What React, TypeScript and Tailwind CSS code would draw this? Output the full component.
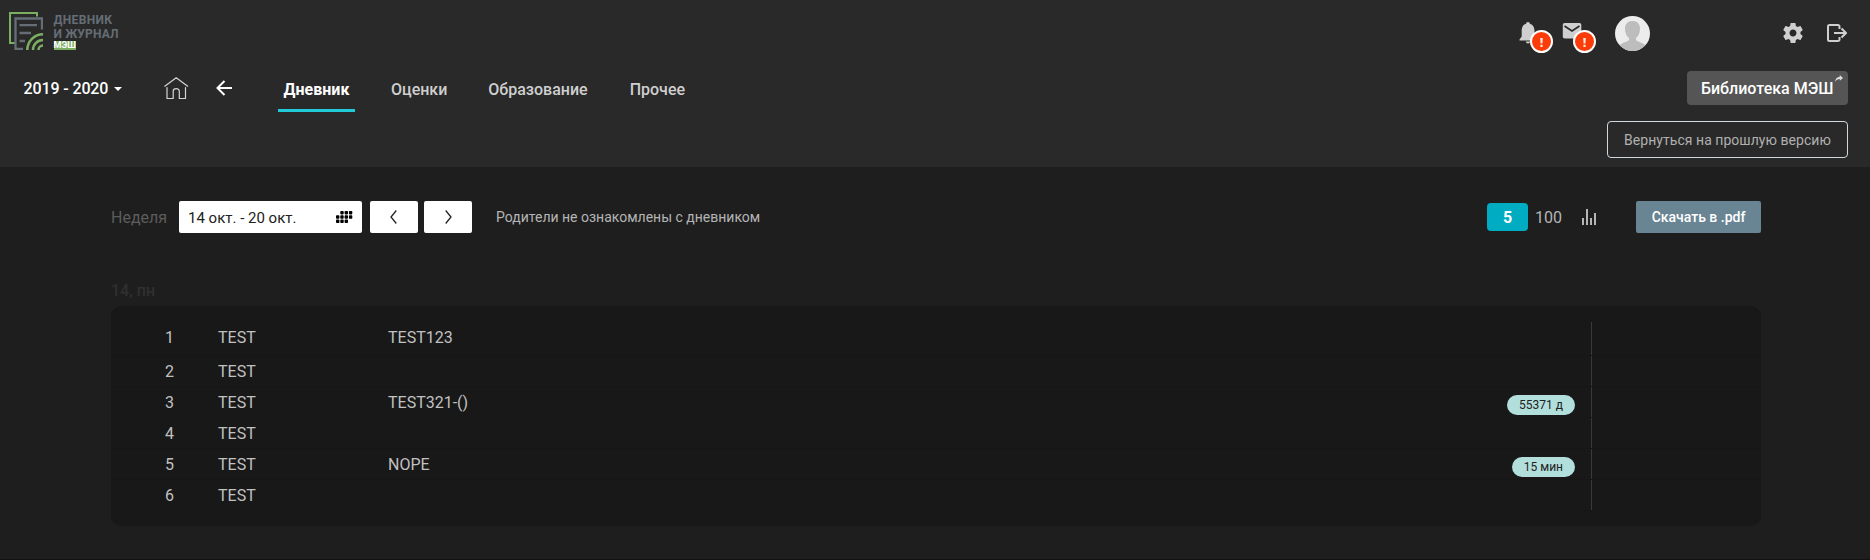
import React from "react";

type Lesson = { n: number; subject: string; topic?: string; time?: string };

const lessons: Lesson[] = [
  { n: 1, subject: "TEST", topic: "TEST123" },
  { n: 2, subject: "TEST" },
  { n: 3, subject: "TEST", topic: "TEST321-()", time: "55371 д" },
  { n: 4, subject: "TEST" },
  { n: 5, subject: "TEST", topic: "NOPE", time: "15 мин" },
  { n: 6, subject: "TEST" },
];

function Logo() {
  return (
    <div className="flex pl-[9px] pt-3">
      <svg width="34" height="38" viewBox="0 0 34 38" fill="none">
        <path d="M6 31H1V1H28V4.500" stroke="#7cae62" strokeWidth="2" />
        <path d="M14 37H6.500V6.500H33V17.500" stroke="#656d76" strokeWidth="2.300" />
        <path d="M10.500 13.200H28M10.500 21H22M10.500 29H16" stroke="#656d76" strokeWidth="2.300" />
        <path d="M18.300 38A15.700 15.700 0 0 1 34 22.300M24 38A10 10 0 0 1 34 28M29.500 38A4.500 4.500 0 0 1 34 33.500" stroke="#7cae62" strokeWidth="2.500" />
      </svg>
      <div className="ml-[10.500px] flex flex-col items-start pt-[1px] text-[12px] font-bold leading-[14px] text-[#656d76]">
        <span className="tracking-[0.350px]">ДНЕВНИК</span>
        <span className="tracking-[0.150px]">И ЖУРНАЛ</span>
        <span className="h-[9px] w-[22px] bg-[#7cae62] text-center text-[9px] leading-[9px] text-white">МЭШ</span>
      </div>
    </div>
  );
}

function Alert() {
  return (
    <span className="absolute left-[11px] top-[8px] flex h-[23px] w-[23px] items-center justify-center rounded-full border-2 border-white bg-[#fb3c09]">
      <svg className="mt-[2px]" width="3" height="9" viewBox="0 0 3 9" fill="#ffe9e0">
        <path d="M.2 0h2.600l-.4 5.500H.6zM.4 6.800h2.200V9H.4z" />
      </svg>
    </span>
  );
}

function Header() {
  return (
    <header className="flex h-[167px] justify-between bg-[#292929]">
      <div className="flex flex-col">
        <div className="h-[71px]"><Logo /></div>
        <div className="flex h-[41px]">
          <div className="flex w-[140px] items-center whitespace-nowrap pb-[5px] pl-[23.500px] text-[16px] font-medium tracking-[-0.120px] text-white">
            2019 - 2020
            <svg className="ml-[6px]" width="8" height="4" viewBox="0 0 8 4" fill="#fff"><path d="M0 0h8L4 4z" /></svg>
          </div>
          <svg className="ml-6 mt-[6px]" width="25" height="23" viewBox="0 0 25 23" fill="none" stroke="#d5d5d5" strokeWidth="1.200" strokeLinejoin="round" strokeLinecap="round">
            <path d="M.8 9.200 12.200.8l11.500 8.400M3 10.500v11h6.200v-7.200c0-3.600 6.100-3.600 6.100 0v7.200h6.200v-11" />
          </svg>
          <svg className="ml-[27px] mt-[9px]" width="16" height="16" viewBox="0 0 16 16" fill="none" stroke="#fff" strokeWidth="2">
            <path d="M16 8H2M8.500 1 1.500 8l7 7" />
          </svg>
          <nav className="ml-[46px] flex text-[16px] font-medium text-[#cfcfcf]">
            <a className="flex w-[77px] justify-center border-b-[3px] border-[#22c9d8] pt-[7px] font-bold leading-6 text-white">Дневник</a>
            <a className="ml-9 pt-[7px] leading-6">Оценки</a>
            <a className="ml-[41px] pt-[7px] leading-6">Образование</a>
            <a className="ml-[42px] pt-[7px] leading-6">Прочее</a>
          </nav>
        </div>
      </div>
      <div className="flex flex-col items-end pr-[22px]">
        <div className="flex h-[71px] pt-4">
          <div className="relative mt-[6px] w-[43px]">
            <svg width="18" height="22" viewBox="0 0 18 22" fill="#cfcfcf"><path d="M9 0c1.200 0 1.800.8 1.900 1.800C14.200 2.800 15.500 5.600 15.500 9v5.500L18 17.500v1H.5v-1l2.200-3V9C2.700 5.600 3.800 2.800 7.100 1.800 7.200.8 7.800 0 9 0zM6.800 19.500h4.400C11 22 7 22 6.800 19.500z" /></svg>
            <Alert />
          </div>
          <div className="relative mt-[6px] w-[53px]">
            <svg className="mt-[1px]" width="20" height="16" viewBox="0 0 20 16"><rect x=".8" width="18.500" height="15.500" rx="1.800" fill="#cfcfcf" /><path d="M2.500 3 10 8l7.500-5" fill="none" stroke="#292929" strokeWidth="1.700" /></svg>
            <Alert />
          </div>
          <svg width="35" height="35" viewBox="0 0 35 35">
            <defs><clipPath id="avatar"><circle cx="17.500" cy="17.500" r="17.500" /></clipPath></defs>
            <g clipPath="url(#avatar)">
              <rect width="35" height="35" fill="#ececec" />
              <path d="M17.500 5c5 0 7.700 3.300 7.500 8-.1 4-1.700 7.500-4 9v2c1 2 8 2 10 7v4H4v-4c2-5 9-5 10-7v-2c-2.300-1.500-3.900-5-4-9-.2-4.700 2.500-8 7.500-8z" fill="#bdbdbd" />
            </g>
          </svg>
          <svg className="ml-[131px] mt-[5px]" width="24" height="24" viewBox="0 0 24 24" fill="#cfcfcf">
            <path d="M19.430 12.980c.04-.32.07-.64.07-.98s-.03-.66-.07-.98l2.110-1.650c.19-.15.24-.42.12-.64l-2-3.460c-.12-.22-.39-.3-.61-.22l-2.490 1c-.52-.4-1.080-.73-1.690-.98l-.38-2.650C14.460 2.180 14.250 2 14 2h-4c-.25 0-.46.18-.49.42l-.38 2.650c-.61.25-1.170.59-1.690.98l-2.490-1c-.23-.09-.49 0-.61.22l-2 3.460c-.13.22-.07.49.12.64l2.110 1.650c-.04.32-.07.65-.07.98s.03.66.07.98l-2.110 1.650c-.19.15-.24.42-.12.64l2 3.460c.12.22.39.3.61.22l2.490-1c.52.4 1.080.73 1.690.98l.38 2.650c.03.24.24.42.49.42h4c.25 0 .46-.18.49-.42l.38-2.650c.61-.25 1.170-.59 1.690-.98l2.490 1c.23.09.49 0 .61-.22l2-3.460c.12-.22.07-.49-.12-.64l-2.110-1.650zM12 15.500c-1.930 0-3.500-1.570-3.500-3.500s1.570-3.500 3.500-3.500 3.500 1.570 3.500 3.500-1.570 3.500-3.500 3.500z" />
          </svg>
          <svg className="ml-[22px] mr-[1px] mt-2" width="20" height="18" viewBox="0 0 20 18" fill="none" stroke="#cfcfcf" strokeWidth="2">
            <path d="M12.500 5V2.500A1.500 1.500 0 0 0 11 1H2.500A1.500 1.500 0 0 0 1 2.500v13A1.500 1.500 0 0 0 2.500 17H11a1.500 1.500 0 0 0 1.500-1.500V13M7 9h12M14.500 4.500 19 9l-4.500 4.500" />
          </svg>
        </div>
        <button className="relative h-[34px] w-[161px] rounded-[4px] bg-[#555] pl-[14px] pt-[2px] text-left text-[16px] font-medium text-white">
          Библиотека МЭШ
          <svg className="absolute right-[5px] top-1" width="8" height="7" viewBox="0 0 8 7" fill="#ddd"><path d="M0 7C.3 4 2 1.900 4.800 1.700V0L8 3 4.800 5.800V4C2.800 4 1 5 0 7z" /></svg>
        </button>
        <button className="mt-4 h-[37px] w-[241px] rounded-[4px] border border-[#cfd8dc] pt-[2px] text-[14px] tracking-[0.040px] text-[#b0b0b0]">Вернуться на прошлую версию</button>
      </div>
    </header>
  );
}

function CalendarDots() {
  const rows = [[1, 2, 3], [0, 1, 2, 3], [0, 1, 2]];
  return (
    <svg width="17" height="12" viewBox="0 0 17 12" fill="#000">
      {rows.map((cols, y) => cols.map((x) => <rect key={`${x}-${y}`} x={x * 4.3} y={y * 4.3} width="3.400" height="3.400" rx=".8" />))}
    </svg>
  );
}

function Toolbar() {
  return (
    <div className="flex h-8 items-center">
      <span className="w-[68px] pt-[2px] text-[16px] text-[#5c5c5c]">Неделя</span>
      <div className="flex h-8 w-[183px] items-center justify-between rounded-[2px] bg-white pl-[9px] pr-[9px] text-[15px] text-[#212121]">
        <span className="pt-[2px]">14 окт. - 20 окт.</span>
        <CalendarDots />
      </div>
      <button className="ml-2 flex h-8 w-12 items-center justify-center rounded-[2px] bg-white">
        <svg className="mr-[1px]" width="7" height="14" viewBox="0 0 7 14" fill="none" stroke="#222" strokeWidth="1.300"><path d="M6.300.5 1 7l5.300 6.500" /></svg>
      </button>
      <button className="ml-[6px] flex h-8 w-12 items-center justify-center rounded-[2px] bg-white">
        <svg width="7" height="14" viewBox="0 0 7 14" fill="none" stroke="#222" strokeWidth="1.300"><path d="M.7.5 6 7 .7 13.500" /></svg>
      </button>
      <span className="ml-6 text-[14px] text-[#b5b5b5]">Родители не ознакомлены с дневником</span>
      <span className="ml-auto flex h-7 w-[41px] items-center justify-center rounded-[4px] bg-[#00acc1] pt-[2px] text-[16px] font-bold text-white">5</span>
      <span className="ml-[7px] w-[27px] pt-[2px] text-[16px] text-[#b5b5b5]">100</span>
      <svg className="ml-5" width="14" height="16" viewBox="0 0 14 16" fill="#b5b5b5"><path d="M0 9h2v7H0zM4 0h2v16H4zM8 9h2v7H8zM12 4h2v12h-2z" /></svg>
      <button className="ml-10 h-8 w-[125px] rounded-[2px] bg-[#698593] text-[14px] font-medium text-white">Скачать в .pdf</button>
    </div>
  );
}

function LessonRow({ lesson }: { lesson: Lesson }) {
  return (
    <div className={`flex border-b border-[#161616] ${lesson.n === 1 ? "h-[34px]" : "h-[31px]"}`}>
      <div className="flex w-[1481px] items-start border-r border-[#393939] pl-[54px] pr-4 leading-6">
        <span className="w-[53px] pt-1">{lesson.n}</span>
        <span className="w-[170px] pt-1">{lesson.subject}</span>
        <span className="pt-1">{lesson.topic}</span>
        {lesson.time && (
          <span className="ml-auto mt-2 h-5 rounded-full bg-[#b2dfdb] px-3 text-[12px] leading-[21px] text-[#212121]">{lesson.time}</span>
        )}
      </div>
    </div>
  );
}

export default function App() {
  return (
    <div className="h-[560px] w-full overflow-hidden border-b border-[#141014] bg-[#1e1e1e] font-[Roboto,sans-serif]">
      <Header />
      <main className="mx-[111px] w-[1650px] pt-[34px]">
        <Toolbar />
        <h2 className="mt-[46px] h-[27px] text-[16px] font-medium leading-6 text-[#303030]">14, пн</h2>
        <section className="h-[220px] rounded-[10px] bg-[#181818] pt-4 text-[16px] text-[#c1c1c1]">
          {lessons.map((lesson) => <LessonRow key={lesson.n} lesson={lesson} />)}
        </section>
      </main>
    </div>
  );
}
